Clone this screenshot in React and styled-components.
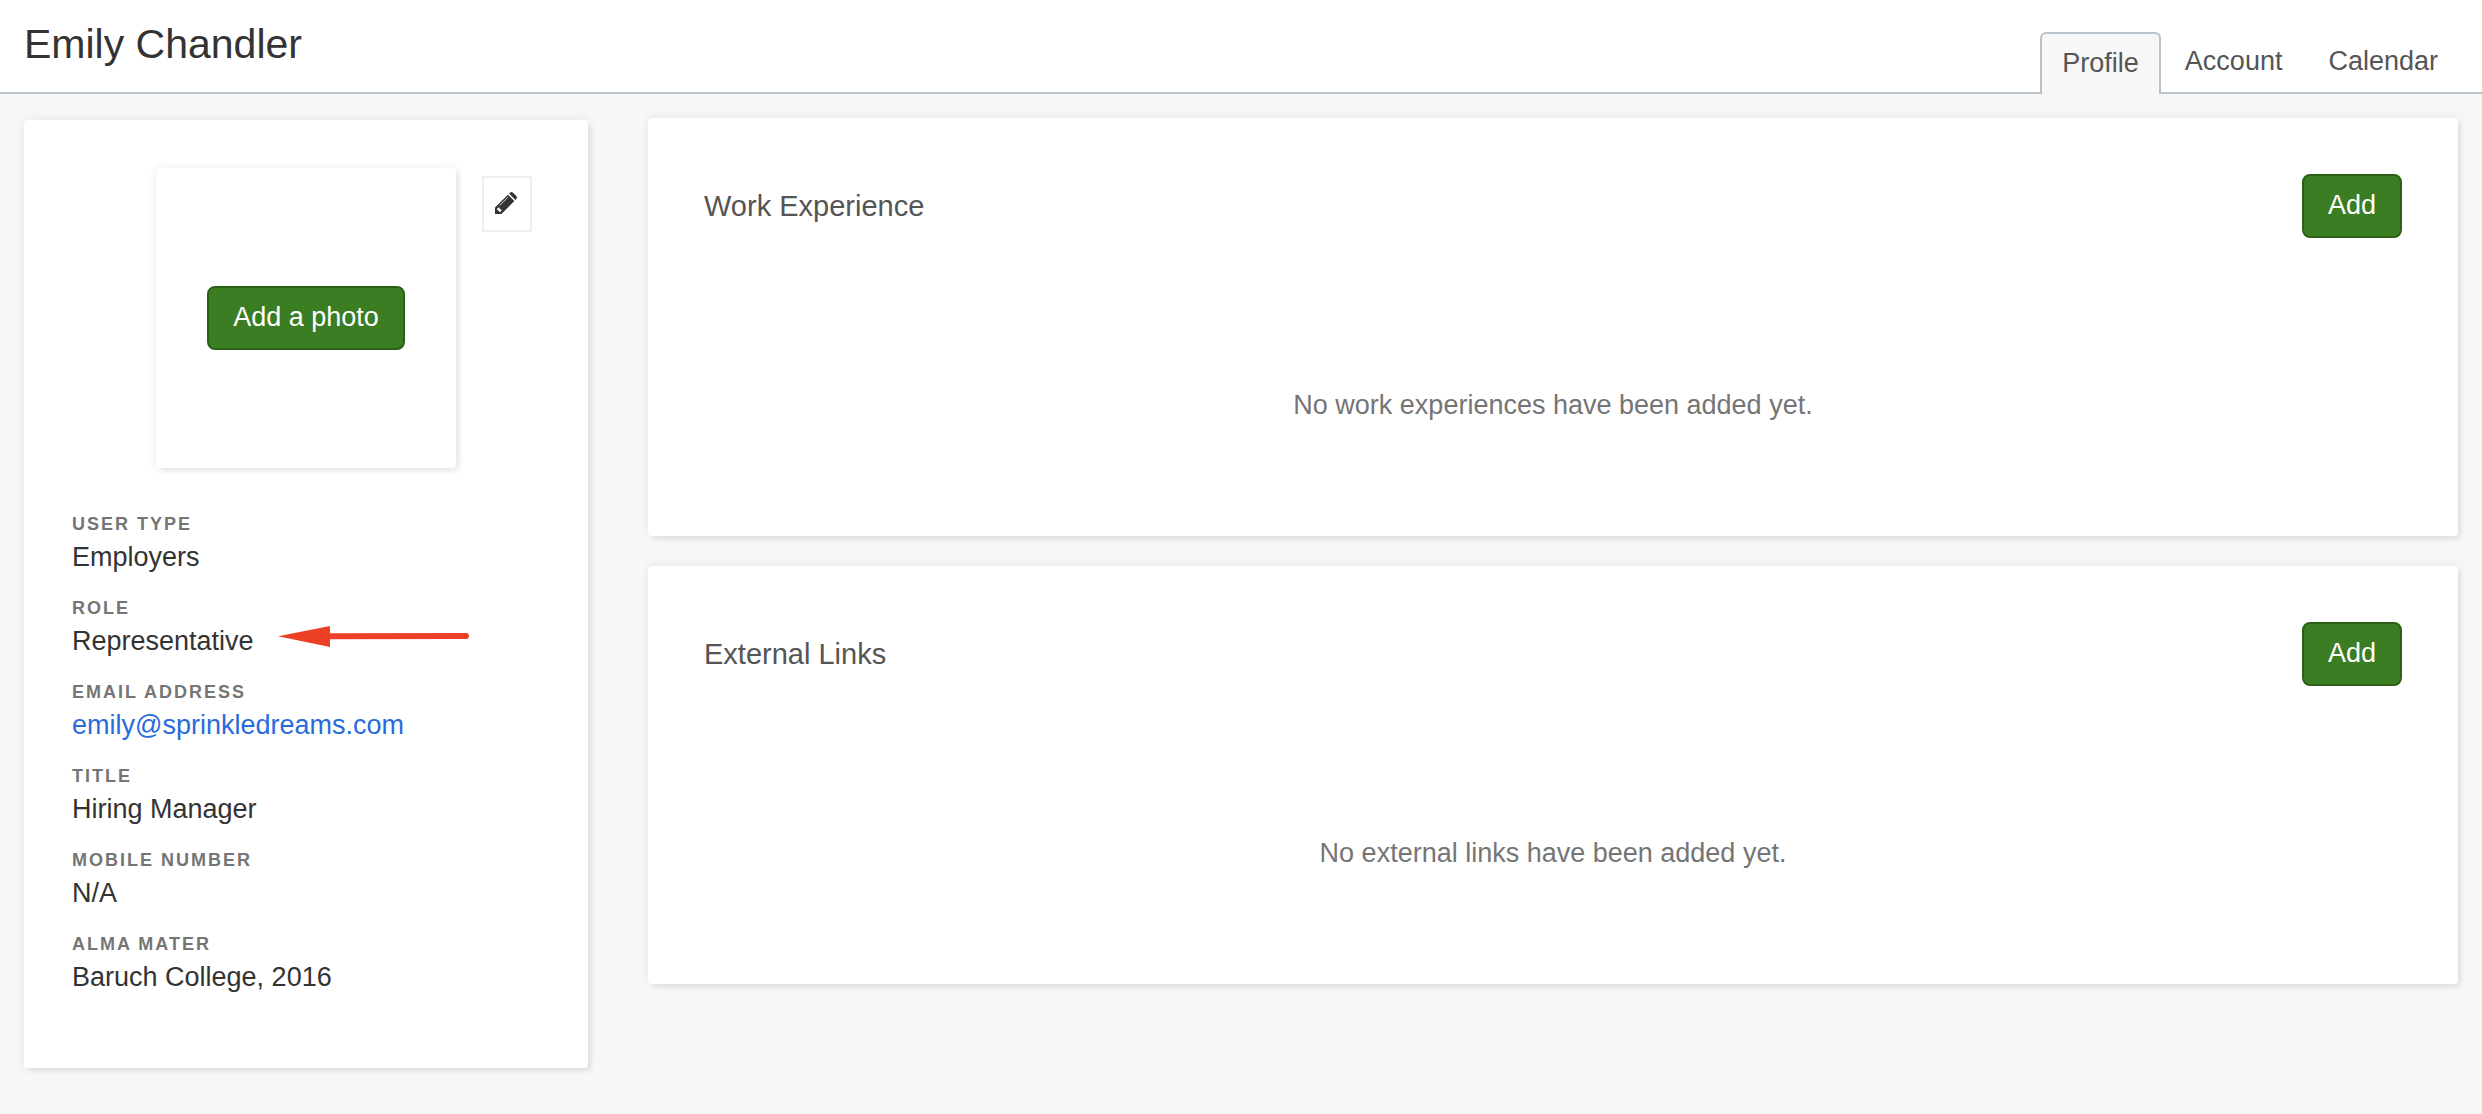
import React, { useState } from 'react'
import styled, { createGlobalStyle } from 'styled-components';

const tabs = ['Profile', 'Account', 'Calendar'];

const details = [
  { label: 'User type', value: 'Employers' },
  { label: 'Role', value: 'Representative', highlighted: true },
  { label: 'Email address', value: 'emily@sprinkledreams.com', isEmail: true },
  { label: 'Title', value: 'Hiring Manager' },
  { label: 'Mobile number', value: 'N/A' },
  { label: 'Alma mater', value: 'Baruch College, 2016' },
];

const sections = [
  { title: 'Work Experience', empty: 'No work experiences have been added yet.' },
  { title: 'External Links', empty: 'No external links have been added yet.' },
];

const Pencil = () => (
  <PencilIcon viewBox="0 0 22 22" aria-hidden="true">
    <path d="M0 15.6 L12.9 2.7 L19.3 9.1 L6.4 22 H0 Z" fill="currentColor" />
    <path d="M14 1.6 L15 .7 Q16.6 -.6 18.2 .9 L21.1 3.8 Q22.6 5.4 21.3 7 L20.4 8 Z" fill="currentColor" />
    <path d="M5 13.2 L12.8 5.4" stroke="white" strokeWidth=".8" strokeLinecap="round" />
    <path d="M1.9 16.9 L3.4 15.4 L4.6 15.7 L4.8 17.2 L6.3 17.4 L6.6 18.6 L5.1 20.1 L4.3 20.1 L3.6 18.4 L1.9 17.7 Z" fill="white" />
  </PencilIcon>
);

const Arrow = () => (
  <ArrowIcon viewBox="0 0 192 28" aria-hidden="true">
    <path d="M50 14.3 L188 14" stroke="#eb4025" strokeWidth="6" strokeLinecap="round" />
    <path d="M0 14.3 L52 4 V25 Z" fill="#eb4025" />
  </ArrowIcon>
);

const Detail = ({ item }) => (
  <div>
    <Label>{item.label}</Label>
    <Value>
      {item.isEmail ? <EmailLink href={`mailto:${item.value}`}>{item.value}</EmailLink> : item.value}
      {item.highlighted && <Arrow />}
    </Value>
  </div>
);

const App = () => {
  const [activeTab, setActiveTab] = useState('Profile');

  return (<>
    <GlobalStyle />
    <Header>
      <UserName>Emily Chandler</UserName>
      <Tabs>
        {tabs.map((tab) => (
          <Tab key={tab} href={`#${tab.toLowerCase()}`} $active={tab === activeTab} onClick={() => setActiveTab(tab)}>
            {tab}
          </Tab>
        ))}
      </Tabs>
    </Header>
    <Content>
      <Sidebar>
        <PhotoRow>
          <Photo>
            <Button type="button">Add a photo</Button>
          </Photo>
          <EditButton type="button" aria-label="Edit profile">
            <Pencil />
          </EditButton>
        </PhotoRow>
        <Details>
          {details.map((item) => <Detail key={item.label} item={item} />)}
        </Details>
      </Sidebar>
      <Sections>
        {sections.map((section) => (
          <Section key={section.title}>
            <SectionHeader>
              <SectionTitle>{section.title}</SectionTitle>
              <Button type="button">Add</Button>
            </SectionHeader>
            <Empty>{section.empty}</Empty>
          </Section>
        ))}
      </Sections>
    </Content>
  </>
  );
}

export default App;

const GlobalStyle = createGlobalStyle`
  * {
    box-sizing: border-box;
  }

  body {
    margin: 0;
    background-color: #f7f7f7;
    color: #333333;
    font-family: "Liberation Sans", Arial, sans-serif;
    font-size: 27px;
  }
`;

const Header = styled.header`
  display: flex;
  justify-content: space-between;
  align-items: flex-end;
  padding: 0 22px 0 24px;
  background-color: white;
  border-bottom: 2px solid #bac3ca;
`;

const UserName = styled.h1`
  margin: 0;
  padding: 18px 0 22px;
  font-size: 41px;
  font-weight: 400;
  line-height: 52px;
`;

const Tabs = styled.nav`
  display: flex;
  gap: 2px;
  height: 62px;
  margin-bottom: -2px;
`;

const Tab = styled.a`
  display: flex;
  align-items: center;
  padding: ${({ $active }) => $active ? '0 20px 2px' : '0 22px 4px'};
  border: ${({ $active }) => $active ? '2px solid #bac3ca' : 'none'};
  border-bottom: none;
  border-radius: 6px 6px 0 0;
  background-color: ${({ $active }) => $active ? '#f7f7f7' : 'transparent'};
  color: #555555;
  text-decoration: none;
`;

const Content = styled.main`
  display: grid;
  grid-template-columns: 564px 1fr;
  align-items: start;
  gap: 60px;
  padding: 24px;
`;

const Card = styled.section`
  background-color: white;
  border-radius: 4px;
  box-shadow: 4px 4px 4px rgba(0, 0, 0, 0.05), 0 0 10px rgba(0, 0, 0, 0.08);
`;

const Sidebar = styled(Card)`
  margin-top: 2px;
  padding: 48px 48px 72px;
`;

const PhotoRow = styled.div`
  display: grid;
  grid-template-columns: 1fr 300px 1fr;
  align-items: start;
`;

const Photo = styled(Card).attrs({ as: 'div' })`
  grid-column: 2;
  display: flex;
  justify-content: center;
  align-items: center;
  height: 300px;
`;

const Button = styled.button`
  height: 64px;
  padding: 0 24px 2px;
  border: 2px solid #2a6117;
  border-radius: 8px;
  background-color: #3a7d22;
  color: white;
  font: inherit;
  cursor: pointer;
`;

const EditButton = styled.button`
  display: flex;
  justify-content: center;
  align-items: center;
  width: 50px;
  height: 56px;
  margin: 8px 0 0 26px;
  padding: 0 2px 2px 0;
  border: 2px solid #eeeeee;
  background-color: white;
  color: #333333;
  cursor: pointer;
`;

const PencilIcon = styled.svg`
  width: 22px;
  height: 22px;
`;

const Details = styled.dl`
  display: flex;
  flex-direction: column;
  gap: 18px;
  margin: 42px 0 0;
`;

const Label = styled.dt`
  color: #757575;
  font-size: 18px;
  font-weight: 700;
  letter-spacing: 2px;
  line-height: 28px;
  text-transform: uppercase;
`;

const Value = styled.dd`
  display: flex;
  gap: 24px;
  margin: 0;
  line-height: 38px;
`;

const EmailLink = styled.a`
  color: #2a6bdb;
  text-decoration: none;
`;

const ArrowIcon = styled.svg`
  width: 192px;
  height: 28px;
`;

const Sections = styled.div`
  display: flex;
  flex-direction: column;
  gap: 30px;
`;

const Section = styled(Card)`
  padding: 56px;
`;

const SectionHeader = styled.div`
  display: flex;
  justify-content: space-between;
  align-items: center;
`;

const SectionTitle = styled.h2`
  margin: 0;
  color: #555555;
  font-size: 29px;
  font-weight: 400;
`;

const Empty = styled.p`
  margin: 0;
  padding: 147px 0 55px;
  color: #757575;
  line-height: 40px;
  text-align: center;
`;
